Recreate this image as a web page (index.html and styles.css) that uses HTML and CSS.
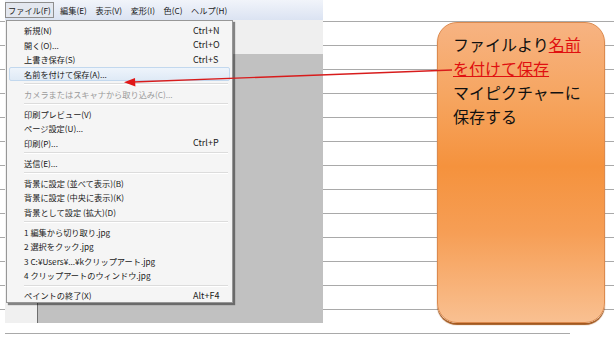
FILE: index.html
```html
<!DOCTYPE html>
<html lang="ja">
<head>
    <meta charset="UTF-8">
    <title>ペイント - 名前を付けて保存</title>
    <link rel="stylesheet" href="styles.css">
</head>
<body>
    <div class="sheet">
        <div class="row">
            <div class="paint">
                <div class="menubar">
                    <span class="top-item open">ファイル(F)</span>
                    <span class="top-item">編集(E)</span>
                    <span class="top-item">表示(V)</span>
                    <span class="top-item">変形(I)</span>
                    <span class="top-item">色(C)</span>
                    <span class="top-item">ヘルプ(H)</span>
                </div>
                <div class="workspace">
                    <div class="toolstrip"></div>
                    <div class="area">
                        <div class="ribbon"></div>
                        <div class="canvas"></div>
                    </div>
                </div>

                <div class="dropdown">
                    <div class="item"><span class="label">新規(N)</span><span class="key">Ctrl+N</span></div>
                    <div class="item"><span class="label">開く(O)...</span><span class="key">Ctrl+O</span></div>
                    <div class="item"><span class="label">上書き保存(S)</span><span class="key">Ctrl+S</span></div>
                    <div class="item active"><span class="label">名前を付けて保存(A)...</span></div>
                    <div class="sep"></div>
                    <div class="item disabled"><span class="label">カメラまたはスキャナから取り込み(C)...</span></div>
                    <div class="sep"></div>
                    <div class="item"><span class="label">印刷プレビュー(V)</span></div>
                    <div class="item"><span class="label">ページ設定(U)...</span></div>
                    <div class="item"><span class="label">印刷(P)...</span><span class="key">Ctrl+P</span></div>
                    <div class="sep"></div>
                    <div class="item"><span class="label">送信(E)...</span></div>
                    <div class="sep"></div>
                    <div class="item"><span class="label">背景に設定 (並べて表示)(B)</span></div>
                    <div class="item"><span class="label">背景に設定 (中央に表示)(K)</span></div>
                    <div class="item"><span class="label">背景として設定 (拡大)(D)</span></div>
                    <div class="sep"></div>
                    <div class="item"><span class="label">1 編集から切り取り.jpg</span></div>
                    <div class="item"><span class="label">2 選択をクック.jpg</span></div>
                    <div class="item"><span class="label">3 C:¥Users¥...¥kクリップアート.jpg</span></div>
                    <div class="item"><span class="label">4 クリップアートのウィンドウ.jpg</span></div>
                    <div class="sep"></div>
                    <div class="item"><span class="label">ペイントの終了(X)</span><span class="key">Alt+F4</span></div>
                </div>
            </div>

            <div class="callout">
                ファイルより<span class="mark">名前<br>を付けて保存</span><br>
                マイピクチャーに<br>
                保存する
            </div>
        </div>
        <div class="rule"></div>

        <svg class="arrow" width="614" height="342" viewBox="0 0 614 342">
            <line x1="452" y1="70" x2="133" y2="82" stroke="#d81c1c" stroke-width="1.4"/>
            <polygon points="124,82.3 135,78 135.4,86.6" fill="#e01818"/>
        </svg>
    </div>
</body>
</html>
```

FILE: styles.css
```css
* { margin: 0; padding: 0; box-sizing: border-box; }
body { background: #ffffff; font-family: "Noto Sans CJK JP", "Noto Sans", sans-serif; color: #111; }

.sheet { position: relative; width: 614px; height: 342px; overflow: hidden;
    background-image: repeating-linear-gradient(to bottom, transparent 0 21px, #a9a9a9 21px 22px, transparent 22px 24px);
    background-size: 100% 320px; background-repeat: no-repeat; }
.row { display: flex; align-items: flex-start; padding-left: 5px; }
.rule { width: 565px; height: 1px; margin: 10px 0 0 5px; background: #a9a9a9; }

/* paint window */
.paint { position: relative; width: 318px; height: 323px; display: flex; flex-direction: column; font-size: 9px; line-height: 1; }
.menubar { height: 20px; display: flex; align-items: center; font-size: 8.2px; background: linear-gradient(#f1f4fa, #dbe3f2); }
.top-item { padding: 3px 4.3px; white-space: nowrap; color: #1a1a1a; }
.top-item.open { padding: 3px 2px; margin-right: 2px; border: 1px solid #8e8e8e; background: #e3e7ef; }
.workspace { flex: 1; display: flex; }
.toolstrip { width: 33px; background: #f0f0f0; border-right: 1px solid #6e6e6e; }
.area { flex: 1; display: flex; flex-direction: column; }
.ribbon { height: 34px; background: #efefef; }
.canvas { flex: 1; background: #c1c1c1; }

/* file menu */
.dropdown { position: absolute; left: 1px; top: 20px; width: 227px; height: 283px; padding: 2px 2px 0 2px;
    background: #f5f5f5; border: 1px solid #979797; box-shadow: 2px 2px 1px rgba(0, 0, 0, 0.45); }
.item { display: flex; align-items: center; height: 14.5px; padding: 0 10px 0 15px; white-space: nowrap; color: #1a1a1a; }
.item .label { flex: 1; font-size: 8.2px; }
.item .key { width: 27px; }
.item.active { background: linear-gradient(#eef4fb, #dfeaf6); border: 1px solid #c2d8ee; border-radius: 2px; padding-left: 14px; }
.item.disabled { color: #9a9a9a; }
.sep { height: 1px; margin: 2px 2px 2.5px 15px; background: #dcdcdc; box-shadow: 0 1px 0 #ffffff; }

/* note */
.callout { width: 168px; height: 301px; margin: 22px 0 0 114px; padding: 9px 0 0 15px;
    font-size: 16px; line-height: 24px; color: #111;
    background: linear-gradient(#f7b382 0%, #f6a560 25%, #f5923d 48%, #f69e55 70%, #f9c091 100%);
    border: 1px solid #dc8a4e; border-radius: 20px; box-shadow: 0 2px 1px #a3591f; }
.mark { color: #e01010; text-decoration: underline; }

.arrow { position: absolute; left: 0; top: 0; pointer-events: none; }
```
